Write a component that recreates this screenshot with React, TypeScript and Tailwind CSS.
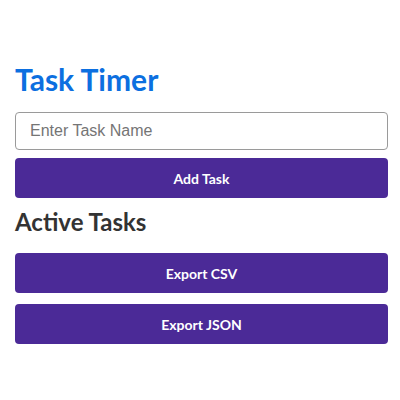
export default function App() {
  return (
    <div className="min-h-[400px] bg-white pl-[15px] pr-[12px] pt-[61px]" style={{ fontFamily: "Lato, 'Noto Sans', sans-serif" }}>
      <h1 className="text-[30px] leading-[36px] font-bold text-[#0c6fe0]">Task Timer</h1>
      <input
        type="text"
        placeholder="Enter Task Name"
        className="mt-[15px] block w-full h-[38px] rounded-[4px] border border-[#9a9a9a] px-[14px] text-[16px] placeholder:text-[#757575] outline-none"
        style={{ fontFamily: "'Liberation Sans', Arial, sans-serif" }}
      />
      <button className="mt-[8px] block w-full h-[40px] rounded-[4px] bg-[#4b2a97] text-white text-[14px] font-bold">
        Add Task
      </button>
      <h2 className="mt-[9px] text-[24px] leading-[30px] font-bold text-[#333333]">Active Tasks</h2>
      <button className="mt-[16px] block w-full h-[40px] rounded-[4px] bg-[#4b2a97] text-white text-[14px] font-bold">
        Export CSV
      </button>
      <button className="mt-[11px] block w-full h-[40px] rounded-[4px] bg-[#4b2a97] text-white text-[14px] font-bold">
        Export JSON
      </button>
    </div>
  );
}
